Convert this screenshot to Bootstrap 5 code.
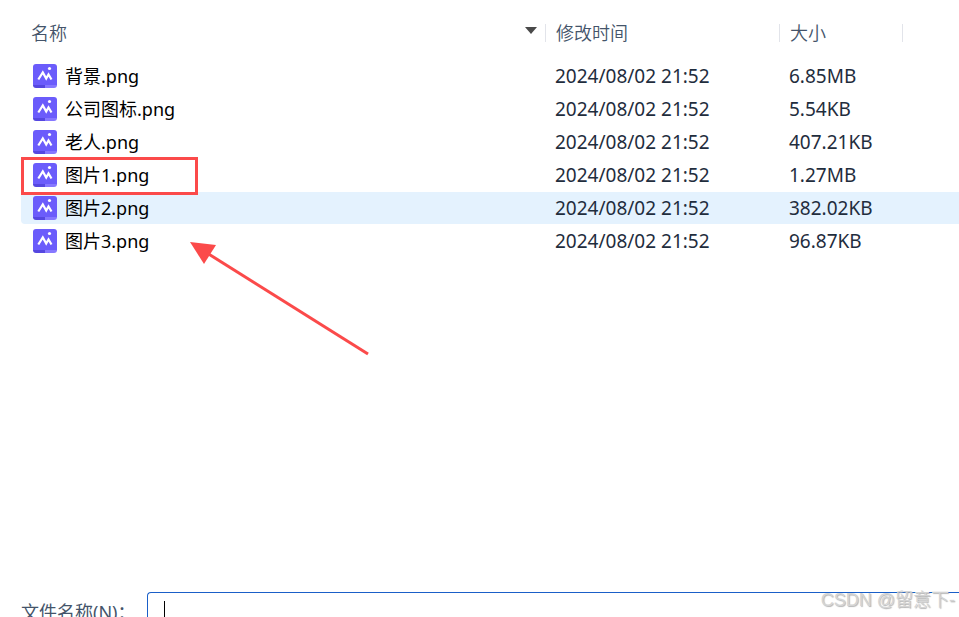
<!DOCTYPE html>
<html lang="zh-CN">
<head>
<meta charset="utf-8">
<meta name="viewport" content="width=device-width, initial-scale=1">
<title>选择文件</title>
<link href="https://cdn.jsdelivr.net/npm/bootstrap@5.3.0/dist/css/bootstrap.min.css" rel="stylesheet">
<style>
  body { font-family: "Noto Sans", "Noto Sans CJK SC", sans-serif; font-size: 18px; color: #000; background: #fff; }
  .file-area { padding: 16px 0 0 21px; }
  .file-table { table-layout: fixed; border-collapse: separate; border-spacing: 0 1px; line-height: 32px; }
  .file-table th, .file-table td { padding: 0; }
  .file-table th { font-weight: 350; font-size: 18px; color: #44546a; padding: 7px 0 17px; }
  .head-cell { height: 18px; line-height: 18px; padding: 0 8px 0 10px; }
  .head-line { border-left: 1px solid #e2e4ea; }
  .col-date { width: 234px; }
  .col-size { width: 123px; }
  .col-rest { width: 57px; }
  .sort-mark { width: 12px; height: 7px; margin-top: -6px; }
  .file-table td { height: 32px; font-size: 19px; color: #1f2d3d; white-space: nowrap; }
  .file-table td.meta { padding-left: 10px; }
  .file-name { height: 32px; padding-left: 12px; gap: 8px; font-size: 18px; color: #000; }
  .file-icon { width: 24px; height: 24px; flex: none; }
  .picked td { background: #e4f2fe; }
  .picked td:first-child { border-radius: 4px 0 0 4px; }
  .red-frame { left: 0; top: -2px; width: 177px; height: 38px; border: 3px solid #fb4a4a; }
  .red-arrow { left: 168px; top: 16px; width: 182px; height: 116px; }
  .name-bar { height: 25px; padding-left: 21px; }
  .name-bar label { width: 126px; line-height: 24px; padding-top: 8px; color: #44546a; }
  .name-bar .form-control { height: 44px; font-size: 18px; border: 1px solid #1a5fc8; border-right: 0; border-radius: 4px 0 0 4px; padding: 8px 16px; box-shadow: none; }
  .caret-bar { left: 17px; top: 9px; width: 1px; height: 22px; background: #000; }
  .author-mark { right: 4px; bottom: 5px; line-height: 24px; font-family: "Liberation Sans", "Noto Sans CJK SC", sans-serif; font-weight: 350; font-size: 18px; color: #d4d4d4; text-shadow: 1px 1px 1px #b4b4b4; }
</style>
<script src="https://cdn.jsdelivr.net/npm/bootstrap@5.3.0/dist/js/bootstrap.bundle.min.js"></script>
</head>
<body class="vh-100 overflow-hidden d-flex flex-column position-relative">
<svg class="d-none" aria-hidden="true">
  <symbol id="picture" viewBox="0 0 24 24">
    <path d="M3 0H21Q24 0 24 3V21.500H0V3Q0 0 3 0Z" fill="#6b5cfb"/>
    <path d="M0 21H12V24H3Q0 24 0 21Z" fill="#5547e0"/>
    <path d="M12 21H24Q24 24 21 24H12Z" fill="#8678ff"/>
    <path d="M5.300 15.500L9.800 8.500L13.200 14.500L15.500 10.500L18.500 15.500" fill="none" stroke="#fff" stroke-width="2.200"/>
    <circle cx="16.500" cy="4.500" r="1.600" fill="#fff"/>
  </symbol>
</svg>
<main class="file-area flex-grow-1">
  <table class="file-table w-100">
    <colgroup><col><col class="col-date"><col class="col-size"><col class="col-rest"></colgroup>
    <thead>
      <tr>
        <th scope="col"><div class="head-cell d-flex justify-content-between align-items-center">名称
          <svg class="sort-mark" viewBox="0 0 12 7"><path d="M0 0H12L6 7Z" fill="#4a4a4a"/></svg></div></th>
        <th scope="col"><div class="head-cell head-line">修改时间</div></th>
        <th scope="col"><div class="head-cell head-line">大小</div></th>
        <th><div class="head-cell head-line"></div></th>
      </tr>
    </thead>
    <tbody>
      <tr><td><div class="file-name d-flex align-items-center"><svg class="file-icon"><use href="#picture"/></svg>背景.png</div></td><td class="meta">2024/08/02 21:52</td><td class="meta">6.85MB</td><td></td></tr>
      <tr><td><div class="file-name d-flex align-items-center"><svg class="file-icon"><use href="#picture"/></svg>公司图标.png</div></td><td class="meta">2024/08/02 21:52</td><td class="meta">5.54KB</td><td></td></tr>
      <tr><td><div class="file-name d-flex align-items-center"><svg class="file-icon"><use href="#picture"/></svg>老人.png</div></td><td class="meta">2024/08/02 21:52</td><td class="meta">407.21KB</td><td></td></tr>
      <tr><td><div class="file-name d-flex align-items-center position-relative"><svg class="file-icon"><use href="#picture"/></svg>图片1.png<span class="red-frame position-absolute z-1"></span></div></td><td class="meta">2024/08/02 21:52</td><td class="meta">1.27MB</td><td></td></tr>
      <tr class="picked"><td><div class="file-name d-flex align-items-center"><svg class="file-icon"><use href="#picture"/></svg>图片2.png</div></td><td class="meta">2024/08/02 21:52</td><td class="meta">382.02KB</td><td></td></tr>
      <tr><td><div class="file-name d-flex align-items-center position-relative"><svg class="file-icon"><use href="#picture"/></svg>图片3.png
        <svg class="red-arrow position-absolute" viewBox="0 0 182 116"><path d="M1 1L27 4L15 23Z" fill="#fb4a4a"/><path d="M18 12L179 113" stroke="#fb4a4a" stroke-width="3"/></svg></div></td><td class="meta">2024/08/02 21:52</td><td class="meta">96.87KB</td><td></td></tr>
    </tbody>
  </table>
</main>
<div class="name-bar d-flex align-items-start flex-shrink-0 overflow-hidden">
  <label for="fileName" class="flex-shrink-0">文件名称(N)：</label>
  <div class="flex-grow-1 position-relative">
    <input id="fileName" type="text" class="form-control">
    <span class="caret-bar position-absolute"></span>
  </div>
</div>
<div class="author-mark position-absolute">CSDN @留意下-</div>
</body>
</html>
